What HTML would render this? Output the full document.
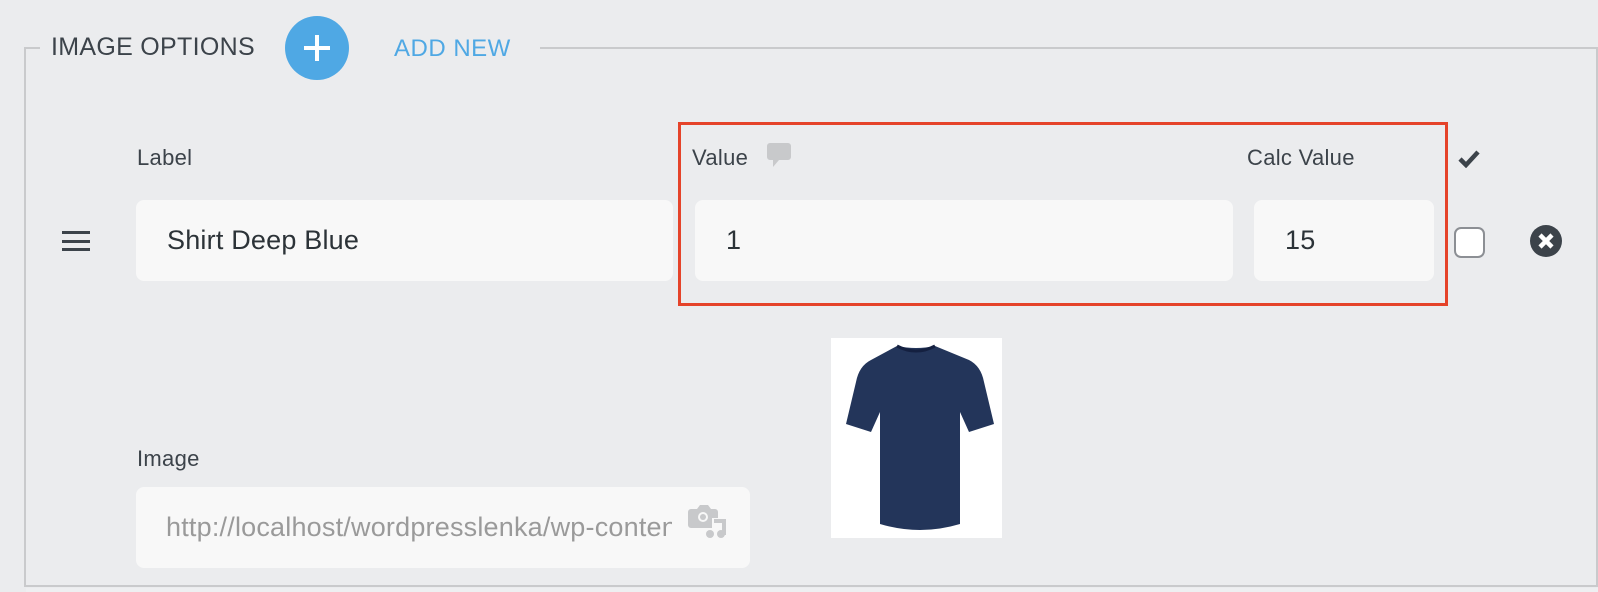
<!DOCTYPE html>
<html><head><meta charset="utf-8"><style>
*{margin:0;padding:0;box-sizing:border-box}
body{width:1598px;height:592px;background:#ebecee;font-family:"Liberation Sans",Arial,sans-serif;color:#3c434a;position:relative;overflow:hidden}
.a{position:absolute}
.inp{position:absolute;background:#f8f8f8;border-radius:8px;font-size:27px;letter-spacing:0.2px;color:#2c3338;display:flex;align-items:center}
.lbl{position:absolute;font-size:22px;letter-spacing:0.3px;color:#3c434a}
</style></head><body>
<div class="a" style="left:24px;top:47px;width:1574px;height:540px;border:2px solid #c9cacc"></div>
<div class="a" style="left:40px;top:20px;width:500px;height:60px;background:#ebecee"></div>
<div class="a" style="left:51px;top:33px;font-size:25px;letter-spacing:0.3px;color:#3c434a">IMAGE OPTIONS</div>
<div class="a" style="left:285px;top:16px;width:64px;height:64px;border-radius:50%;background:#4fa8e4"></div>
<div class="a" style="left:315px;top:35px;width:4px;height:26px;background:#fff"></div>
<div class="a" style="left:304px;top:46px;width:26px;height:4px;background:#fff"></div>
<div class="a" style="left:394px;top:35px;font-size:24px;letter-spacing:0.5px;color:#4fa8e4">ADD NEW</div>

<div class="lbl" style="left:137px;top:145px">Label</div>
<div class="lbl" style="left:692px;top:145px">Value</div>
<svg class="a" style="left:767px;top:143px" width="24" height="26" viewBox="0 0 24 26"><path d="M3 0h18a3 3 0 0 1 3 3v11a3 3 0 0 1-3 3H12l-6 7v-7H3a3 3 0 0 1-3-3V3a3 3 0 0 1 3-3z" fill="#c8c9cb"/></svg>
<div class="lbl" style="left:1247px;top:145px">Calc Value</div>
<svg class="a" style="left:1458px;top:150px" width="22" height="18" viewBox="0 0 22 18"><path d="M2 9l6 6L20 2" stroke="#3c434a" stroke-width="4.5" fill="none"/></svg>

<div class="a" style="left:62px;top:231px;width:28px;height:3px;background:#3c434a"></div>
<div class="a" style="left:62px;top:240px;width:28px;height:3px;background:#3c434a"></div>
<div class="a" style="left:62px;top:248px;width:28px;height:3px;background:#3c434a"></div>

<div class="inp" style="left:136px;top:200px;width:537px;height:81px;padding-left:31px">Shirt Deep Blue</div>
<div class="inp" style="left:695px;top:200px;width:538px;height:81px;padding-left:31px">1</div>
<div class="inp" style="left:1254px;top:200px;width:180px;height:81px;padding-left:31px">15</div>
<div class="a" style="left:678px;top:122px;width:770px;height:184px;border:3px solid #e5432a"></div>

<div class="a" style="left:1454px;top:227px;width:31px;height:31px;border:2px solid #8c8f94;border-radius:7px;background:#fff"></div>
<svg class="a" style="left:1529px;top:224px" width="34" height="34" viewBox="0 0 34 34"><circle cx="17" cy="17" r="16" fill="#3c434a"/><path d="M11 11l12 12M23 11L11 23" stroke="#fff" stroke-width="4.5"/></svg>

<div class="lbl" style="left:137px;top:446px">Image</div>
<div class="inp" style="left:136px;top:487px;width:614px;height:81px;padding-left:30px;color:#9a9a9a;overflow:hidden;white-space:nowrap"><span style="width:506px;overflow:hidden;display:inline-block">http://localhost/wordpresslenka/wp-content</span></div>
<svg class="a" style="left:688px;top:501px" width="38" height="38" viewBox="0 0 38 38"><path d="M3 8h6l3-4h8l3 4h4a3 3 0 0 1 3 3v6h-6v10H3a3 3 0 0 1-3-3V11a3 3 0 0 1 3-3z" fill="#c8c9cb"/><circle cx="15" cy="16" r="5" fill="#f8f8f8"/><circle cx="15" cy="16" r="3" fill="#c8c9cb"/><path d="M26 20h10v14" stroke="#c8c9cb" stroke-width="4" fill="none"/><circle cx="22" cy="33" r="4" fill="#c8c9cb"/><circle cx="33" cy="33" r="4" fill="#c8c9cb"/></svg>

<div class="a" style="left:831px;top:338px;width:171px;height:200px;background:#fff"></div>
<svg class="a" style="left:831px;top:338px" width="171" height="200" viewBox="0 0 171 200"><path d="M66 8q19 4 38 0l34 14q12 6 15 22l10 42-25 8-9-20v112q-40 12-80 0V74l-9 20-25-8 10-42q3-16 15-22z" fill="#23355a"/><path d="M66 8q19 10 38 0" stroke="#142040" stroke-width="3" fill="none"/></svg>
<div class="a" style="left:26px;top:588px;width:1572px;height:4px;background:#eeeff1"></div>
</body></html>
